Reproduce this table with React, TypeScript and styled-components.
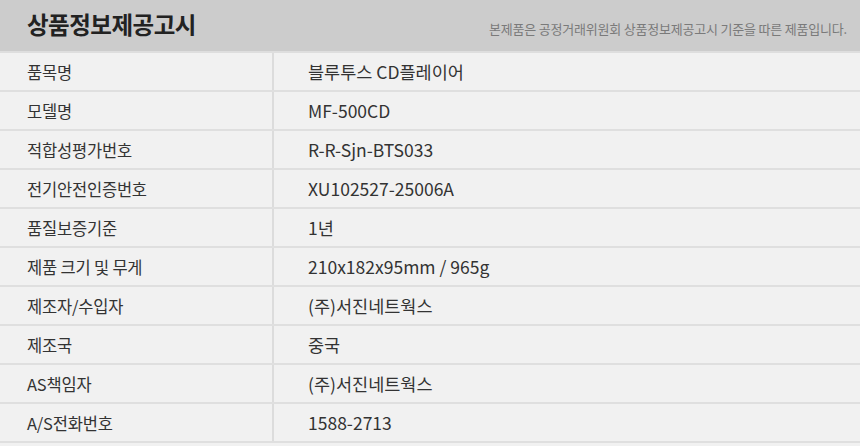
import React from 'react'
import styled, { createGlobalStyle } from 'styled-components'

const GlobalStyle = createGlobalStyle`
	body {
		margin: 0;
		background: #ffffff;
		font-family: 'Noto Sans CJK KR', 'Noto Sans', sans-serif;
	}
`

const rows: [string, string][] = [
	['품목명', '블루투스 CD플레이어'],
	['모델명', 'MF-500CD'],
	['적합성평가번호', 'R-R-Sjn-BTS033'],
	['전기안전인증번호', 'XU102527-25006A'],
	['품질보증기준', '1년'],
	['제품 크기 및 무게', '210x182x95mm / 965g'],
	['제조자/수입자', '(주)서진네트웍스'],
	['제조국', '중국'],
	['AS책임자', '(주)서진네트웍스'],
	['A/S전화번호', '1588-2713'],
]

const App = () => {
	return (
		<Wrapper>
			<GlobalStyle />
			<Header>
				<Title>상품정보제공고시</Title>
				<Note>본제품은 공정거래위원회 상품정보제공고시 기준을 따른 제품입니다.</Note>
			</Header>
			<Table>
				{rows.map(([label, value]) => (
					<Row key={label}>
						<Label>{label}</Label>
						<Value>{value}</Value>
					</Row>
				))}
			</Table>
		</Wrapper>
	)
}

export default App

const Wrapper = styled.div`
	width: 860px;
	height: 446px;
	background: #f1f1f1;
	overflow: hidden;
`

const Header = styled.div`
	height: 53px;
	border-bottom: 2px solid #dedede;
	background: #cccccc;
	display: flex;
	align-items: center;
	justify-content: space-between;
	padding: 0 13px 0 27px;
	box-sizing: border-box;
`

const Title = styled.h1`
	margin: 0;
	font-size: 23.5px;
	font-weight: 700;
	color: #222;
	letter-spacing: -0.5px;
	margin-top: -4px;
`

const Note = styled.span`
	font-size: 13px;
	color: #7a7a7a;
	letter-spacing: -0.2px;
	margin-top: 6px;
`

const Table = styled.div`
	display: flex;
	flex-direction: column;
`

const Row = styled.div`
	display: grid;
	grid-template-columns: 274px 1fr;
	height: 39px;
	box-sizing: border-box;
	border-bottom: 2px solid #dfdfdf;
	color: #333;
`

const Label = styled.div`
	display: flex;
	align-items: center;
	padding-left: 27px;
	border-right: 2px solid #dcdcdc;
	font-size: 16.5px;
	letter-spacing: -0.2px;
`

const Value = styled.div`
	display: flex;
	align-items: center;
	padding-left: 34px;
	font-size: 17.5px;
	letter-spacing: 0;
`
